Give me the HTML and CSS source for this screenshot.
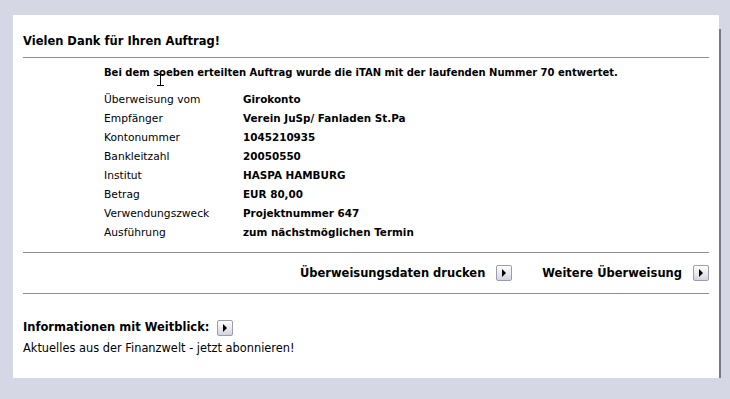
FILE: index.html
```html
<!DOCTYPE html>
<html lang="de">
<head>
    <meta charset="UTF-8">
    <title>Auftrag</title>
    <link rel="stylesheet" href="styles.css">
</head>
<body>
    <div class="panel">
        <h2 class="title">Vielen Dank für Ihren Auftrag!</h2>

        <div class="details">
            <p class="message">Bei dem soeben erteilten Auftrag wurde die iTAN mit der laufenden Nummer 70 entwertet.<span class="cursor"></span></p>
            <div class="row"><span class="label">Überweisung vom</span><span class="value">Girokonto</span></div>
            <div class="row"><span class="label">Empfänger</span><span class="value">Verein JuSp/ Fanladen St.Pa</span></div>
            <div class="row"><span class="label">Kontonummer</span><span class="value">1045210935</span></div>
            <div class="row"><span class="label">Bankleitzahl</span><span class="value">20050550</span></div>
            <div class="row"><span class="label">Institut</span><span class="value">HASPA HAMBURG</span></div>
            <div class="row"><span class="label">Betrag</span><span class="value">EUR 80,00</span></div>
            <div class="row"><span class="label">Verwendungszweck</span><span class="value">Projektnummer 647</span></div>
            <div class="row"><span class="label">Ausführung</span><span class="value">zum nächstmöglichen Termin</span></div>
        </div>

        <div class="actions">
            <a class="action" href="#">Überweisungsdaten drucken <span class="go"></span></a>
            <a class="action" href="#">Weitere Überweisung <span class="go"></span></a>
        </div>

        <div class="info">
            <a class="info-title" href="#">Informationen mit Weitblick: <span class="go"></span></a>
            <p class="info-text">Aktuelles aus der Finanzwelt - jetzt abonnieren!</p>
        </div>
    </div>
</body>
</html>
```

FILE: styles.css
```css
body {
    margin: 0;
    padding: 15px 0 0 13px;
    background-color: #d6d7e5;
    font-family: "DejaVu Sans", Verdana, sans-serif;
    font-size: 11px;
    color: #000;
}

.panel {
    width: 686px;
    height: 363px;
    padding: 0 10px;
    background-color: #fff;
    box-shadow: 8px 8px 0 -6px #77778a;
}

.title {
    margin: 0;
    padding: 18px 0 8px;
    font-size: 11.5px;
    line-height: 16px;
    border-bottom: 1px solid #8b8b99;
}

.details {
    padding: 5px 0 10px 81px;
    border-bottom: 1px solid #8b8b99;
}

.message {
    position: relative;
    margin: 0 0 8px;
    font-size: 10px;
    font-weight: bold;
    line-height: 19px;
}

.cursor {
    position: absolute;
    left: 56px;
    top: 11px;
    width: 1px;
    height: 12px;
    background: #000;
}

.cursor::before,
.cursor::after {
    content: "";
    position: absolute;
    left: -3px;
    width: 7px;
    height: 1px;
    background: #000;
}

.cursor::before { top: 0; }
.cursor::after { bottom: 0; }

.row {
    display: flex;
    line-height: 19px;
}

.label {
    width: 139px;
    font-size: 10.7px;
}

.value {
    font-size: 10.4px;
    font-weight: bold;
}

.actions {
    display: flex;
    justify-content: flex-end;
    align-items: center;
    gap: 30px;
    height: 40px;
    border-bottom: 1px solid #8b8b99;
}

.action,
.info-title {
    display: flex;
    align-items: center;
    gap: 11px;
    color: #000;
    font-weight: bold;
    text-decoration: none;
}

.action {
    font-size: 11.5px;
}

.go {
    position: relative;
    width: 14px;
    height: 14px;
    border: 1px solid #9c9cac;
    border-radius: 2px;
    background: linear-gradient(#ffffff, #d4d4de);
}

.go::after {
    content: "";
    position: absolute;
    left: 5px;
    top: 3px;
    border-left: 4px solid #000;
    border-top: 4px solid transparent;
    border-bottom: 4px solid transparent;
}

.info {
    padding-top: 24px;
}

.info-title {
    gap: 8px;
    font-size: 11.5px;
    line-height: 19px;
}

.info-text {
    margin: 2px 0 0;
    font-size: 11.4px;
    line-height: 19px;
}
```
